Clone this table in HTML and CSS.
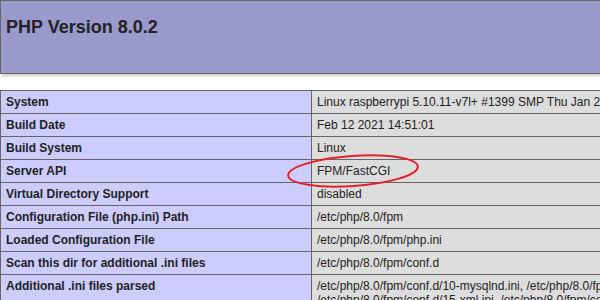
FILE: index.html
```html
<!DOCTYPE html>
<html>
<head>
<meta charset="utf-8">
<title>phpinfo()</title>
<link rel="stylesheet" href="styles.css">
</head>
<body>
<div class="page">
  <div class="header">
    <h1 class="title">PHP Version 8.0.2</h1>
  </div>
  <table class="info">
    <tr><td class="e">System</td><td class="v">Linux raspberrypi 5.10.11-v7l+ #1399 SMP Thu Jan 28 12:09:48 GMT 2021 armv7l</td></tr>
    <tr><td class="e">Build Date</td><td class="v">Feb 12 2021 14:51:01</td></tr>
    <tr><td class="e">Build System</td><td class="v">Linux</td></tr>
    <tr><td class="e">Server API</td><td class="v">FPM/FastCGI</td></tr>
    <tr><td class="e">Virtual Directory Support</td><td class="v">disabled</td></tr>
    <tr><td class="e">Configuration File (php.ini) Path</td><td class="v">/etc/php/8.0/fpm</td></tr>
    <tr><td class="e">Loaded Configuration File</td><td class="v">/etc/php/8.0/fpm/php.ini</td></tr>
    <tr><td class="e">Scan this dir for additional .ini files</td><td class="v">/etc/php/8.0/fpm/conf.d</td></tr>
    <tr><td class="e">Additional .ini files parsed</td><td class="v">/etc/php/8.0/fpm/conf.d/10-mysqlnd.ini, /etc/php/8.0/fpm/conf.d/10-opcache.ini, /etc/php/8.0/fpm/conf.d/10-pdo.ini, /etc/php/8.0/fpm/conf.d/15-xml.ini, /etc/php/8.0/fpm/conf.d/20-calendar.ini, /etc/php/8.0/fpm/conf.d/20-ctype.ini</td></tr>
  </table>
  <svg class="mark" width="140" height="44" viewBox="0 0 140 44" aria-hidden="true">
    <ellipse cx="69" cy="22" rx="65" ry="15" fill="none" stroke="#e3232b" stroke-width="2" transform="rotate(-4 69 22)"/>
  </svg>
</div>
</body>
</html>
```
FILE: styles.css
```css
html, body {
  margin: 0;
  padding: 0;
  background: #fff;
  height: 300px;
  overflow: hidden;
}
.page {
  position: relative;
  width: 600px;
  height: 300px;
  overflow: hidden;
  font-family: "Liberation Sans", Arial, sans-serif;
  color: #222;
}
.header {
  width: 932px;
  height: 72px;
  box-sizing: content-box;
  border: 1px solid #666;
  background: #99c;
  box-shadow: 1px 2px 3px #ccc;
  padding: 0 0 0 5px;
}
.title {
  margin: 16px 0 0;
  font-size: 18px;
  line-height: 21px;
  font-weight: bold;
}
.info {
  border-collapse: collapse;
  border: 0;
  width: 934px;
  margin-top: 16px;
  box-shadow: 1px 2px 3px #ccc;
  table-layout: fixed;
}
.info td {
  border: 1px solid #666;
  font-size: 12px;
  line-height: 14px;
  padding: 4px 5px;
  vertical-align: baseline;
}
.e {
  background: #ccf;
  width: 300px;
  font-weight: bold;
}
.v {
  background: #ddd;
  word-wrap: break-word;
}
.mark {
  position: absolute;
  left: 284px;
  top: 149px;
}
```
